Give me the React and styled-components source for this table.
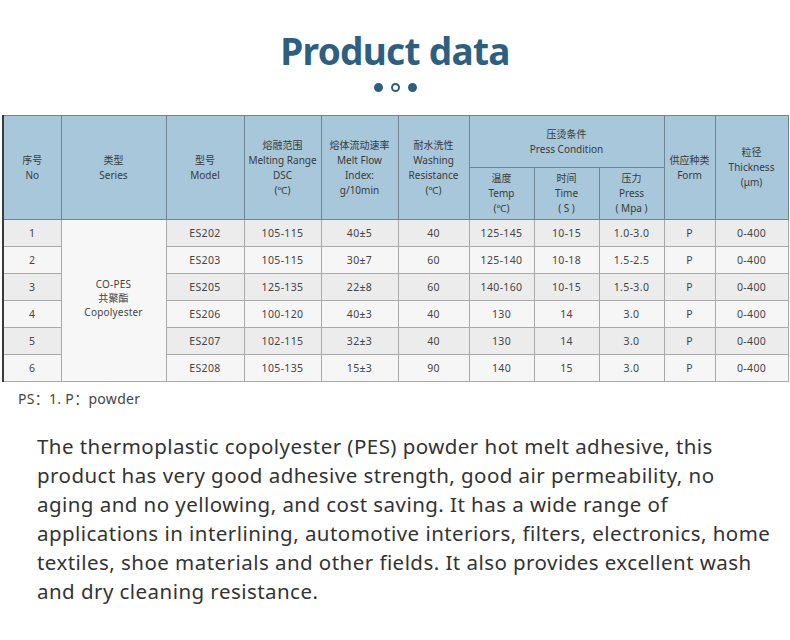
import React from "react";
import styled, { createGlobalStyle } from "styled-components";

const Global = createGlobalStyle`
  html, body { margin: 0; padding: 0; background: #ffffff; }
  body { font-family: "Noto Sans", "Noto Sans CJK SC", sans-serif; color: #333; }
`;

const Page = styled.div`
  width: 790px;
  height: 640px;
  overflow: hidden;
  background: #fff;
  display: flex;
  flex-direction: column;
`;

const Heading = styled.header`
  display: flex;
  flex-direction: column;
  align-items: center;
  padding-top: 29px;
`;

const Title = styled.h1`
  margin: 0;
  font-family: "Noto Sans", sans-serif;
  font-weight: 700;
  font-size: 37px;
  line-height: 44px;
  letter-spacing: -0.7px;
  color: #2f5f80;
`;

const Dots = styled.div`
  display: flex;
  gap: 8px;
  margin-top: 10px;
`;

const Dot = styled.span`
  width: 9px;
  height: 9px;
  box-sizing: border-box;
  border-radius: 50%;
  background: ${(p) => (p.$hollow ? "#fff" : "#2f5f80")};
  border: 2px solid #2f5f80;
`;

const TableWrap = styled.div`
  margin: 23px 0 0 2px;
  width: 785px;
`;

const Table = styled.table`
  border-collapse: collapse;
  table-layout: fixed;
  width: 785px;
  font-family: "Noto Sans", "Noto Sans CJK SC", sans-serif;
  font-size: 10px;
  color: #3a3a3a;
  border-left: 2px solid #3a3a3a;
`;

const HeadCell = styled.th`
  background: #a8c7da;
  font-weight: 400;
  line-height: 15px;
  text-align: center;
  vertical-align: middle;
  padding: 0 2px;
  border: 1px solid #6f8595;
  height: ${(p) => p.$h || 50}px;
  color: #3a3a3a;
`;

const Row = styled.tr`
  height: 27px;
  background: ${(p) => (p.$alt ? "#f6f6f6" : "#ececec")};
`;

const Cell = styled.td`
  text-align: center;
  vertical-align: middle;
  padding: 0;
  font-size: 10.5px;
  letter-spacing: 0.35px;
  color: #444;
  border: 1px solid #a9a9a9;
  border-left-color: ${(p) => (p.$darkLeft ? "#444" : "#a9a9a9")};
  line-height: 14px;
  background: transparent;
`;

const SeriesCell = styled(Cell)`
  background: #f7f7f7;
  font-size: 10px;
  line-height: 14px;
  letter-spacing: 0.2px;
  padding-bottom: 6px;
`;

const Note = styled.p`
  margin: 8px 0 0 18px;
  font-size: 14px;
  line-height: 18px;
  letter-spacing: 0.3px;
  color: #444;
`;

const Para = styled.p`
  margin: 24px 0 0 37px;
  font-size: 20.5px;
  line-height: 29px;
  color: #333;
  letter-spacing: 0.45px;
  white-space: nowrap;
`;

const widths = [58, 105, 78, 77, 77, 71, 65, 65, 65, 51, 73];

const rows = [
  ["1", "ES202", "105-115", "40±5", "40", "125-145", "10-15", "1.0-3.0", "P", "0-400"],
  ["2", "ES203", "105-115", "30±7", "60", "125-140", "10-18", "1.5-2.5", "P", "0-400"],
  ["3", "ES205", "125-135", "22±8", "60", "140-160", "10-15", "1.5-3.0", "P", "0-400"],
  ["4", "ES206", "100-120", "40±3", "40", "130", "14", "3.0", "P", "0-400"],
  ["5", "ES207", "102-115", "32±3", "40", "130", "14", "3.0", "P", "0-400"],
  ["6", "ES208", "105-135", "15±3", "90", "140", "15", "3.0", "P", "0-400"],
];

const lines = (arr) =>
  arr.map((t, i) => (
    <React.Fragment key={i}>
      {i > 0 && <br />}
      {t}
    </React.Fragment>
  ));

export default function App() {
  return (
    <Page>
      <Global />
      <Heading>
        <Title>Product data</Title>
        <Dots>
          <Dot />
          <Dot $hollow />
          <Dot />
        </Dots>
      </Heading>
      <TableWrap>
        <Table>
          <colgroup>
            {widths.map((w, i) => (
              <col key={i} style={{ width: w }} />
            ))}
          </colgroup>
          <thead>
            <tr>
              <HeadCell rowSpan={2} $h={51}>{lines(["序号", "No"])}</HeadCell>
              <HeadCell rowSpan={2}>{lines(["类型", "Series"])}</HeadCell>
              <HeadCell rowSpan={2}>{lines(["型号", "Model"])}</HeadCell>
              <HeadCell rowSpan={2}>{lines(["熔融范围", "Melting Range", "DSC", "(℃)"])}</HeadCell>
              <HeadCell rowSpan={2}>{lines(["熔体流动速率", "Melt Flow", "Index:", "g/10min"])}</HeadCell>
              <HeadCell rowSpan={2}>{lines(["耐水洗性", "Washing", "Resistance", "(℃)"])}</HeadCell>
              <HeadCell colSpan={3} $h={51}>{lines(["压烫条件", "Press Condition"])}</HeadCell>
              <HeadCell rowSpan={2}>{lines(["供应种类", "Form"])}</HeadCell>
              <HeadCell rowSpan={2}>{lines(["粒径", "Thickness", "(μm)"])}</HeadCell>
            </tr>
            <tr>
              <HeadCell $h={51}>{lines(["温度", "Temp", "(℃)"])}</HeadCell>
              <HeadCell $h={51}>{lines(["时间", "Time", "( S )"])}</HeadCell>
              <HeadCell $h={51}>{lines(["压力", "Press", "( Mpa )"])}</HeadCell>
            </tr>
          </thead>
          <tbody>
            {rows.map((r, i) => (
              <Row key={i} $alt={i % 2 === 1}>
                <Cell>{r[0]}</Cell>
                {i === 0 && (
                  <SeriesCell rowSpan={6}>
                    {lines(["CO-PES", "共聚酯", "Copolyester"])}
                  </SeriesCell>
                )}
                <Cell>{r[1]}</Cell>
                <Cell>{r[2]}</Cell>
                <Cell>{r[3]}</Cell>
                <Cell>{r[4]}</Cell>
                <Cell>{r[5]}</Cell>
                <Cell $darkLeft>{r[6]}</Cell>
                <Cell>{r[7]}</Cell>
                <Cell>{r[8]}</Cell>
                <Cell>{r[9]}</Cell>
              </Row>
            ))}
          </tbody>
        </Table>
      </TableWrap>
      <Note>PS：1. P：powder</Note>
      <Para>
        The thermoplastic copolyester (PES) powder hot melt adhesive, this
        <br />
        product has very good adhesive strength, good air permeability, no
        <br />
        aging and no yellowing, and cost saving. It has a wide range of
        <br />
        applications in interlining, automotive interiors, filters, electronics, home
        <br />
        textiles, shoe materials and other fields. It also provides excellent wash
        <br />
        and dry cleaning resistance.
      </Para>
    </Page>
  );
}
